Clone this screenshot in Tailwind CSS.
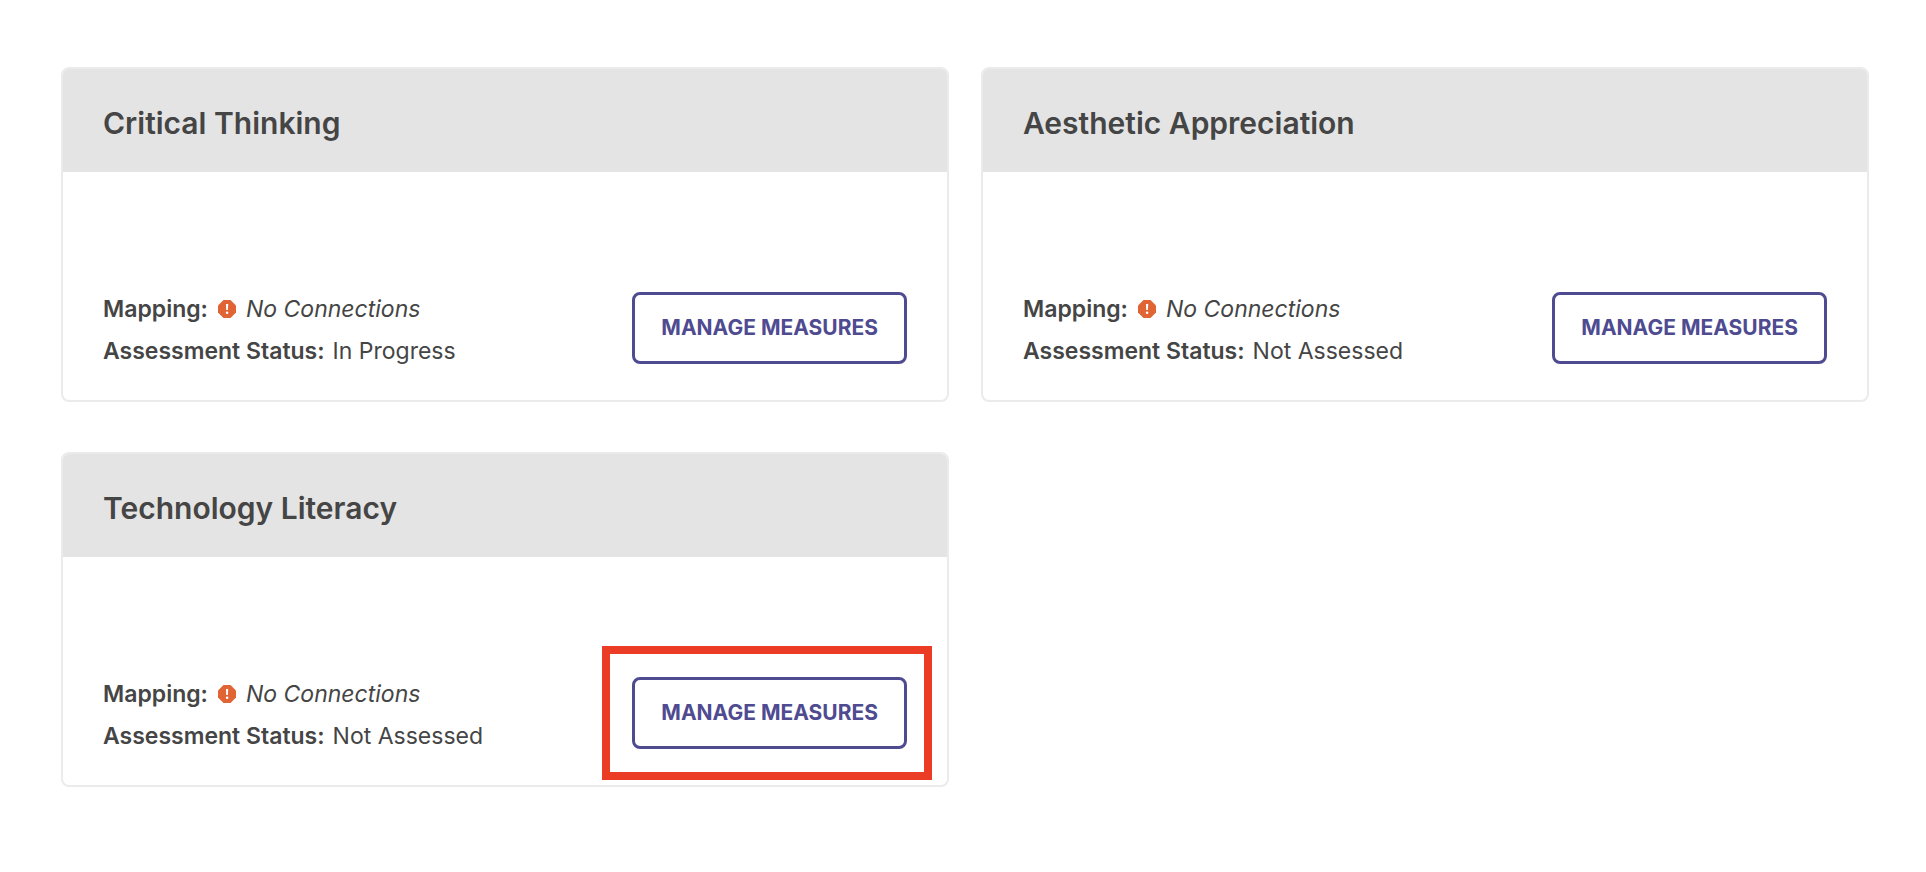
<!DOCTYPE html>
<html lang="en">
<head>
<meta charset="utf-8">
<title>Measures</title>
<script src="https://cdn.jsdelivr.net/npm/@tailwindcss/browser@4"></script>
</head>
<body class="bg-white font-['Inter',sans-serif] text-[23px] text-[#454545]">
<svg class="hidden" aria-hidden="true">
  <symbol id="alert" viewBox="0 0 18 18">
    <path d="M5.500 0h7L18 5.500v7L12.500 18h-7L0 12.500v-7z" fill="#e06434"/>
    <path d="M8 4h2.200l-.3 6H8.200z" fill="#fff"/>
    <circle cx="9.100" cy="12.700" r="1.300" fill="#fff"/>
  </symbol>
</svg>
<main class="grid grid-cols-2 gap-x-8 gap-y-[50px] pt-[67px] pr-[57px] pb-16 pl-[61px]">
  <article class="overflow-hidden rounded-lg border-2 border-[#ebebeb]">
    <header class="bg-[#e4e4e4] px-10 pt-8 pb-[26px]"><h2 class="text-[30px] leading-[45px] font-semibold">Critical Thinking</h2></header>
    <div class="flex items-end justify-between px-10 pt-[116px] pb-7">
      <dl class="leading-[42px]">
        <div class="flex"><dt class="font-semibold">Mapping:</dt><dd class="ml-[10px] flex items-center gap-[10px] italic"><svg class="size-[18px]" aria-hidden="true"><use href="#alert"/></svg>No Connections</dd></div>
        <div class="flex"><dt class="font-semibold">Assessment Status:</dt><dd class="ml-2">In Progress</dd></div>
      </dl>
      <button type="button" class="mb-2 h-[72px] rounded-lg border-3 border-[#4f4b91] px-[26px] text-[21px] font-bold text-[#4f4b91]">MANAGE MEASURES</button>
    </div>
  </article>
  <article class="overflow-hidden rounded-lg border-2 border-[#ebebeb]">
    <header class="bg-[#e4e4e4] px-10 pt-8 pb-[26px]"><h2 class="text-[30px] leading-[45px] font-semibold">Aesthetic Appreciation</h2></header>
    <div class="flex items-end justify-between px-10 pt-[116px] pb-7">
      <dl class="leading-[42px]">
        <div class="flex"><dt class="font-semibold">Mapping:</dt><dd class="ml-[10px] flex items-center gap-[10px] italic"><svg class="size-[18px]" aria-hidden="true"><use href="#alert"/></svg>No Connections</dd></div>
        <div class="flex"><dt class="font-semibold">Assessment Status:</dt><dd class="ml-2">Not Assessed</dd></div>
      </dl>
      <button type="button" class="mb-2 h-[72px] rounded-lg border-3 border-[#4f4b91] px-[26px] text-[21px] font-bold text-[#4f4b91]">MANAGE MEASURES</button>
    </div>
  </article>
  <article class="overflow-hidden rounded-lg border-2 border-[#ebebeb]">
    <header class="bg-[#e4e4e4] px-10 pt-8 pb-[26px]"><h2 class="text-[30px] leading-[45px] font-semibold">Technology Literacy</h2></header>
    <div class="flex items-end justify-between px-10 pt-[116px] pb-7">
      <dl class="leading-[42px]">
        <div class="flex"><dt class="font-semibold">Mapping:</dt><dd class="ml-[10px] flex items-center gap-[10px] italic"><svg class="size-[18px]" aria-hidden="true"><use href="#alert"/></svg>No Connections</dd></div>
        <div class="flex"><dt class="font-semibold">Assessment Status:</dt><dd class="ml-2">Not Assessed</dd></div>
      </dl>
      <div class="relative mb-2 flex">
        <button type="button" class="h-[72px] rounded-lg border-3 border-[#4f4b91] px-[26px] text-[21px] font-bold text-[#4f4b91]">MANAGE MEASURES</button>
        <!-- Highlight frame over the button -->
        <div class="pointer-events-none absolute -top-[31px] -right-[25px] -bottom-[31px] -left-[30px] border-8 border-[#eb3d25]"></div>
      </div>
    </div>
  </article>
</main>
</body>
</html>
